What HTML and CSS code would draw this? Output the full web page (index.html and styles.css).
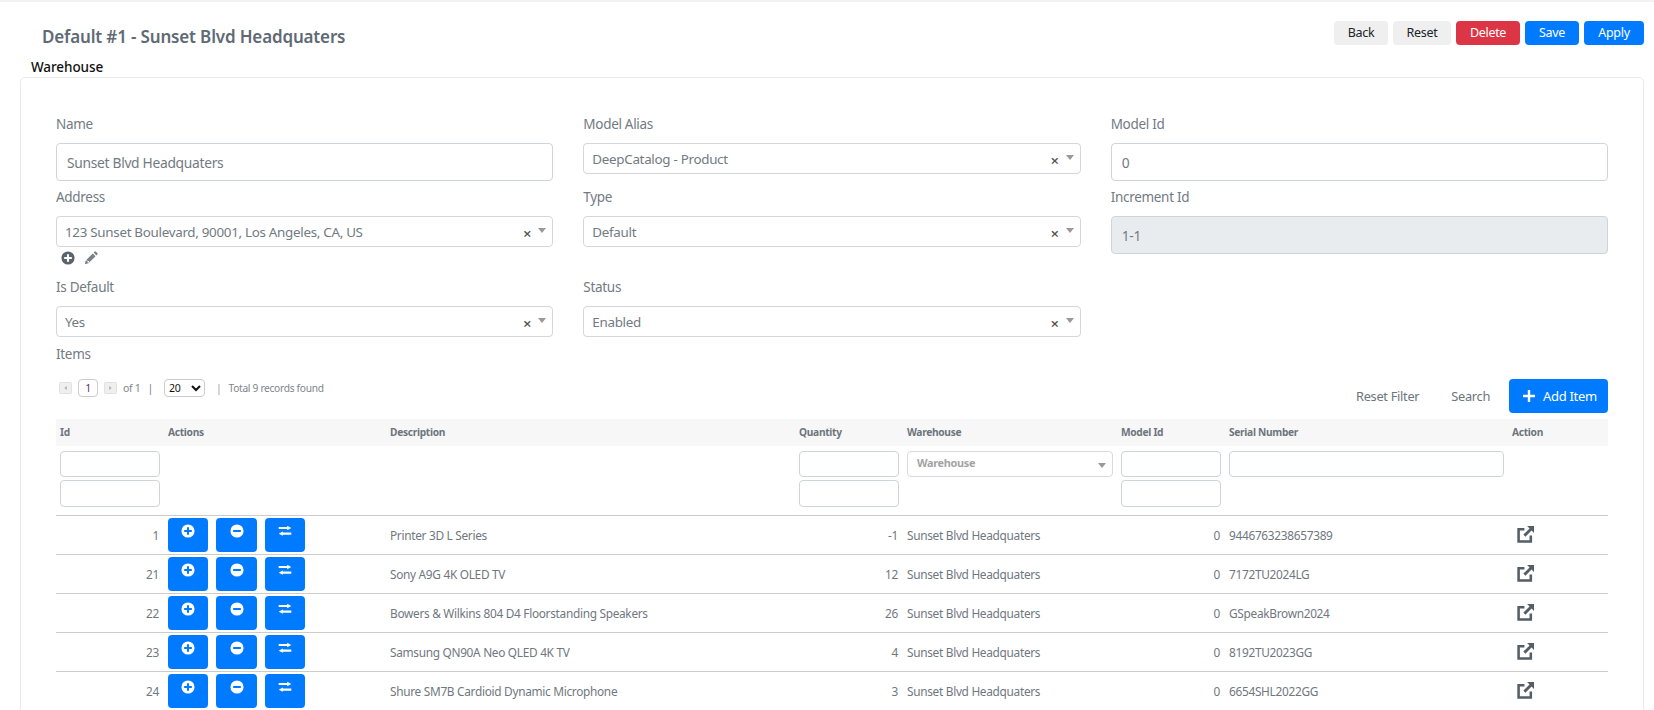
FILE: index.html
```html
<!DOCTYPE html>
<html lang="en">
<head>
<meta charset="utf-8">
<title>Default #1 - Sunset Blvd Headquaters</title>
<link rel="stylesheet" href="styles.css">
</head>
<body>
<svg class="defs" width="0" height="0" aria-hidden="true">
  <symbol id="i-plus" viewBox="0 0 16 16"><path fill-rule="evenodd" d="M8 .5a7.5 7.5 0 1 1 0 15 7.5 7.5 0 0 1 0-15zM6.8 3.6v3.2H3.6v2.4h3.2v3.2h2.4V9.2h3.2V6.800H9.200V3.600z"/></symbol>
  <symbol id="i-minus" viewBox="0 0 16 16"><path fill-rule="evenodd" d="M8 .5a7.500 7.500 0 1 1 0 15 7.500 7.500 0 0 1 0-15zM3.600 6.800v2.400h8.800V6.800z"/></symbol>
  <symbol id="i-swap" viewBox="0 0 16 16"><path d="M.8 3.300h9.700V2L15.200 4.500 10.500 7V5.700H.8zM15.200 9.800H5.500V8.500L.8 11l4.700 2.500v-1.300h9.700z"/></symbol>
  <symbol id="i-pencil" viewBox="0 0 16 16"><path d="M1 15l.9-4.100 2 .3.300 1.900 1.900.3L5.100 14.100zM2.800 10l7.200-7.200 3.200 3.200L6 13.200l-.3-1.900-1.900-.300zM11 1.800l1-1a1.200 1.200 0 0 1 1.700 0l1.500 1.500a1.200 1.200 0 0 1 0 1.700l-1 1z"/></symbol>
  <symbol id="i-link" viewBox="0 0 16 16"><path fill="none" stroke="currentColor" stroke-width="2.400" d="M7 3H1.500v11.500H13V9"/><path d="M9.500 0H16v6.500l-2.300-2.300-5.800 5.800-1.900-1.900 5.800-5.800z"/></symbol>
</svg>
<div class="page">
  <header class="topbar">
    <h1 class="title">Default #1 - Sunset Blvd Headquaters</h1>
    <div class="topbar-actions">
      <button class="btn btn-light btn-back">Back</button>
      <button class="btn btn-light btn-reset">Reset</button>
      <button class="btn btn-danger btn-delete">Delete</button>
      <button class="btn btn-primary btn-save">Save</button>
      <button class="btn btn-primary btn-apply">Apply</button>
    </div>
  </header>
  <div class="tab-label">Warehouse</div>
  <section class="card">
    <div class="form-grid">
      <div class="field">
        <label class="label">Name</label>
        <input class="control" value="Sunset Blvd Headquaters">
      </div>
      <div class="field">
        <label class="label">Model Alias</label>
        <div class="combo"><span>DeepCatalog - Product</span><span class="combo-x">×</span><span class="caret"></span></div>
      </div>
      <div class="field">
        <label class="label">Model Id</label>
        <input class="control" value="0">
      </div>
      <div class="field field-tall">
        <label class="label">Address</label>
        <div class="combo"><span>123 Sunset Boulevard, 90001, Los Angeles, CA, US</span><span class="combo-x">×</span><span class="caret"></span></div>
        <div class="mini-icons">
          <svg class="mini-plus"><use href="#i-plus"/></svg>
          <svg class="mini-pencil"><use href="#i-pencil"/></svg>
        </div>
      </div>
      <div class="field field-tall">
        <label class="label">Type</label>
        <div class="combo"><span>Default</span><span class="combo-x">×</span><span class="caret"></span></div>
      </div>
      <div class="field field-tall">
        <label class="label">Increment Id</label>
        <input class="control control-disabled" value="1-1" disabled>
      </div>
      <div class="field field-last">
        <label class="label">Is Default</label>
        <div class="combo"><span>Yes</span><span class="combo-x">×</span><span class="caret"></span></div>
      </div>
      <div class="field field-last">
        <label class="label">Status</label>
        <div class="combo"><span>Enabled</span><span class="combo-x">×</span><span class="caret"></span></div>
      </div>
    </div>
    <div class="label items-label">Items</div>
    <div class="toolbar">
      <div class="pager">
        <span class="page-step page-prev"></span>
        <span class="page-current">1</span>
        <span class="page-step page-next"></span>
        <span class="page-of">of 1</span>
        <span class="page-sep">|</span>
        <select class="page-size"><option>20</option></select>
        <span class="page-sep page-sep-2">|</span>
        <span class="page-total">Total 9 records found</span>
      </div>
      <div class="tools">
        <button class="link-btn link-reset">Reset Filter</button>
        <button class="link-btn link-search">Search</button>
        <button class="btn-add"><svg viewBox="0 0 12 12"><path d="M4.800 0h2.400v4.800H12v2.400H7.200V12H4.800V7.200H0V4.800h4.800z"/></svg>Add Item</button>
      </div>
    </div>
    <table class="grid">
      <colgroup>
        <col class="c-id"><col class="c-actions"><col class="c-desc"><col class="c-qty"><col class="c-wh"><col class="c-model"><col class="c-serial"><col class="c-action">
      </colgroup>
      <thead>
        <tr class="head-row">
          <th>Id</th><th>Actions</th><th>Description</th><th>Quantity</th><th>Warehouse</th><th>Model Id</th><th>Serial Number</th><th>Action</th>
        </tr>
        <tr class="filter-row">
          <td><input class="filter"><input class="filter filter-2"></td>
          <td></td>
          <td></td>
          <td><input class="filter"><input class="filter filter-2"></td>
          <td><div class="filter-combo">Warehouse<span class="caret"></span></div></td>
          <td><input class="filter"><input class="filter filter-2"></td>
          <td><input class="filter"></td>
          <td></td>
        </tr>
      </thead>
      <tbody>
        <tr>
          <td class="num">1</td>
          <td class="act"><button class="icon-btn"><svg><use href="#i-plus"/></svg></button><button class="icon-btn icon-btn-wide"><svg><use href="#i-minus"/></svg></button><button class="icon-btn"><svg><use href="#i-swap"/></svg></button></td>
          <td>Printer 3D L Series</td>
          <td class="num">-1</td>
          <td>Sunset Blvd Headquaters</td>
          <td class="num">0</td>
          <td>9446763238657389</td>
          <td class="open"><svg><use href="#i-link"/></svg></td>
        </tr>
        <tr>
          <td class="num">21</td>
          <td class="act"><button class="icon-btn"><svg><use href="#i-plus"/></svg></button><button class="icon-btn icon-btn-wide"><svg><use href="#i-minus"/></svg></button><button class="icon-btn"><svg><use href="#i-swap"/></svg></button></td>
          <td>Sony A9G 4K OLED TV</td>
          <td class="num">12</td>
          <td>Sunset Blvd Headquaters</td>
          <td class="num">0</td>
          <td>7172TU2024LG</td>
          <td class="open"><svg><use href="#i-link"/></svg></td>
        </tr>
        <tr>
          <td class="num">22</td>
          <td class="act"><button class="icon-btn"><svg><use href="#i-plus"/></svg></button><button class="icon-btn icon-btn-wide"><svg><use href="#i-minus"/></svg></button><button class="icon-btn"><svg><use href="#i-swap"/></svg></button></td>
          <td>Bowers &amp; Wilkins 804 D4 Floorstanding Speakers</td>
          <td class="num">26</td>
          <td>Sunset Blvd Headquaters</td>
          <td class="num">0</td>
          <td>GSpeakBrown2024</td>
          <td class="open"><svg><use href="#i-link"/></svg></td>
        </tr>
        <tr>
          <td class="num">23</td>
          <td class="act"><button class="icon-btn"><svg><use href="#i-plus"/></svg></button><button class="icon-btn icon-btn-wide"><svg><use href="#i-minus"/></svg></button><button class="icon-btn"><svg><use href="#i-swap"/></svg></button></td>
          <td>Samsung QN90A Neo QLED 4K TV</td>
          <td class="num">4</td>
          <td>Sunset Blvd Headquaters</td>
          <td class="num">0</td>
          <td>8192TU2023GG</td>
          <td class="open"><svg><use href="#i-link"/></svg></td>
        </tr>
        <tr>
          <td class="num">24</td>
          <td class="act"><button class="icon-btn"><svg><use href="#i-plus"/></svg></button><button class="icon-btn icon-btn-wide"><svg><use href="#i-minus"/></svg></button><button class="icon-btn"><svg><use href="#i-swap"/></svg></button></td>
          <td>Shure SM7B Cardioid Dynamic Microphone</td>
          <td class="num">3</td>
          <td>Sunset Blvd Headquaters</td>
          <td class="num">0</td>
          <td>6654SHL2022GG</td>
          <td class="open"><svg><use href="#i-link"/></svg></td>
        </tr>
      </tbody>
    </table>
  </section>
</div>
</body>
</html>
```
FILE: styles.css
```css
* { box-sizing: border-box; }
html, body { margin: 0; padding: 0; height: 710px; overflow: hidden; background: #fff; }
body { font-family: "Noto Sans", "Open Sans", sans-serif; color: #6c757d; letter-spacing: -0.3px; }
button, input, select { font-family: inherit; letter-spacing: inherit; }
.defs { position: absolute; }
.page { width: 1654px; height: 710px; border-top: 2px solid #f3f3f3; overflow: hidden; }

.topbar { display: flex; justify-content: space-between; align-items: flex-start; padding: 19px 10px 0 42px; height: 55px; }
.title { margin: 5px 0 0; font-size: 17px; line-height: 22px; font-weight: 600; letter-spacing: -0.16px; color: #5f6a74; }
.topbar-actions { display: flex; gap: 5px; }
.btn { height: 24px; border: 0; border-radius: 4px; padding: 0; font-size: 12.500px; line-height: 24px; }
.btn-light { background: #efefef; color: #212529; }
.btn-danger { background: #dc3545; color: #fff; }
.btn-primary { background: #007bff; color: #fff; }
.btn-back { width: 54px; }
.btn-reset { width: 58px; }
.btn-delete { width: 64px; }
.btn-save { width: 54px; }
.btn-apply { width: 60px; }

.tab-label { height: 20px; padding-left: 31px; font-size: 13.500px; line-height: 20px; font-weight: 500; letter-spacing: -0.08px; color: #111; }

.card { margin: 0 10px 0 20px; height: 660px; border: 1px solid #ebebeb; border-radius: 5px; padding: 36px 35px 0; }

.form-grid { display: grid; grid-template-columns: repeat(3, 1fr); column-gap: 30px; }
.field { height: 73px; }
.field-tall { height: 90px; }
.field-last { height: 67px; }
.label { display: block; height: 20px; margin-bottom: 9px; font-size: 13.500px; line-height: 20px; color: #727a82; }
.control { display: block; width: 100%; height: 38px; border: 1px solid #ced4da; border-radius: 4px; padding: 0 10px; font-size: 13.800px; color: #727a82; background: #fff; outline: 0; }
.control-disabled { background: #e9ecef; }
.combo { display: flex; align-items: center; height: 31px; border: 1px solid #d3d6da; border-radius: 4px; padding: 0 8px; font-size: 13.400px; color: #727a82; position: relative; }
.combo-x { position: absolute; right: 21px; top: 6px; font-size: 15px; line-height: 20px; color: #555; font-weight: 600; }
.caret { position: absolute; right: 6px; top: 11px; border-left: 4px solid transparent; border-right: 4px solid transparent; border-top: 5px solid #999; }
.mini-icons { display: flex; align-items: center; gap: 9px; height: 16px; margin-top: 3px; padding-left: 5px; }
.mini-plus { width: 14px; height: 14px; fill: #5b646c; }
.mini-pencil { width: 14px; height: 14px; fill: #7a8289; }

.items-label { margin: 0; }
.toolbar { display: flex; justify-content: space-between; align-items: flex-start; height: 34px; margin-top: 15px; margin-bottom: 6px; }

.pager { display: flex; align-items: center; height: 18px; padding-left: 3px; font-size: 10.500px; color: #7d858c; }
.page-step { width: 13px; height: 12px; background: #efefef; border: 1px solid #e2e2e2; border-radius: 2px; position: relative; }
.page-step::after { content: ""; position: absolute; top: 3px; left: 4px; border-top: 2.500px solid transparent; border-bottom: 2.500px solid transparent; }
.page-prev::after { border-right: 3px solid #bbb; }
.page-next::after { border-left: 3px solid #bbb; }
.page-current { width: 20px; height: 18px; margin: 0 6px; border: 1px solid #ccc; border-radius: 4px; text-align: center; line-height: 16px; color: #5a2d82; font-size: 10.500px; }
.page-of { margin-left: 6px; }
.page-sep { margin: 0 11px 0 7px; color: #8a6fa0; }
.page-size { width: 41px; height: 18px; padding: 0; border: 1px solid #ccc; border-radius: 4px; background: #fff; font-size: 10.500px; color: #111; }
.page-sep-2 { margin: 0 7px 0 11px; color: #9aa0a6; }
.page-total { font-size: 10.200px; }

.tools { display: flex; align-items: center; height: 34px; }
.link-btn { border: 0; background: none; padding: 0; font-size: 12.800px; line-height: 34px; color: #6c757d; }
.link-reset { margin-right: 32px; }
.link-search { margin-right: 19px; }
.btn-add { display: flex; align-items: center; gap: 8px; width: 99px; height: 34px; padding: 0 0 0 14px; border: 0; border-radius: 4px; background: #007bff; color: #fff; font-size: 13px; }
.btn-add svg { width: 12px; height: 12px; fill: #fff; }

.grid { width: 1552px; table-layout: fixed; border-collapse: separate; border-spacing: 0; font-size: 11.850px; color: #70777e; }
.c-id { width: 108px; }
.c-actions { width: 222px; }
.c-desc { width: 409px; }
.c-qty { width: 108px; }
.c-wh { width: 214px; }
.c-model { width: 108px; }
.c-serial { width: 283px; }
.c-action { width: 100px; }
.head-row th { height: 27px; padding: 0 4px 2px; background: #f7f7f7; text-align: left; font-size: 10.200px; font-weight: 700; color: #6c757d; }
.filter-row td { height: 69px; padding: 5px 4px 0; vertical-align: top; }
.filter { display: block; width: 100%; height: 26px; padding: 0 6px; border: 1px solid #ced4da; border-radius: 4px; background: #fff; outline: 0; }
.filter-2 { height: 27px; margin-top: 3px; }
.filter-combo { position: relative; height: 26px; padding: 0 9px; border: 1px solid #d7dade; border-radius: 4px; font-size: 10.900px; line-height: 22px; font-weight: 700; color: #a3a3a3; }
.filter-combo .caret { top: 11px; }
tbody td { height: 39px; padding: 0 4px; border-top: 1px solid #ccc; vertical-align: middle; white-space: nowrap; }
.grid .num { text-align: right; padding-right: 5px; }
.grid .act { padding: 2px 4px 2px; vertical-align: top; }
.icon-btn { display: inline-flex; justify-content: center; padding: 6px 0 0; width: 40px; height: 34px; margin-right: 8px; border: 0; border-radius: 4px; background: #007bff; vertical-align: top; }
.icon-btn-wide { width: 41px; }
.icon-btn svg { width: 14px; height: 14px; fill: #fff; }
.open { padding-left: 9px; }
.open svg { display: block; width: 17px; height: 17px; margin-top: -1px; color: #555e66; fill: #555e66; }
```
